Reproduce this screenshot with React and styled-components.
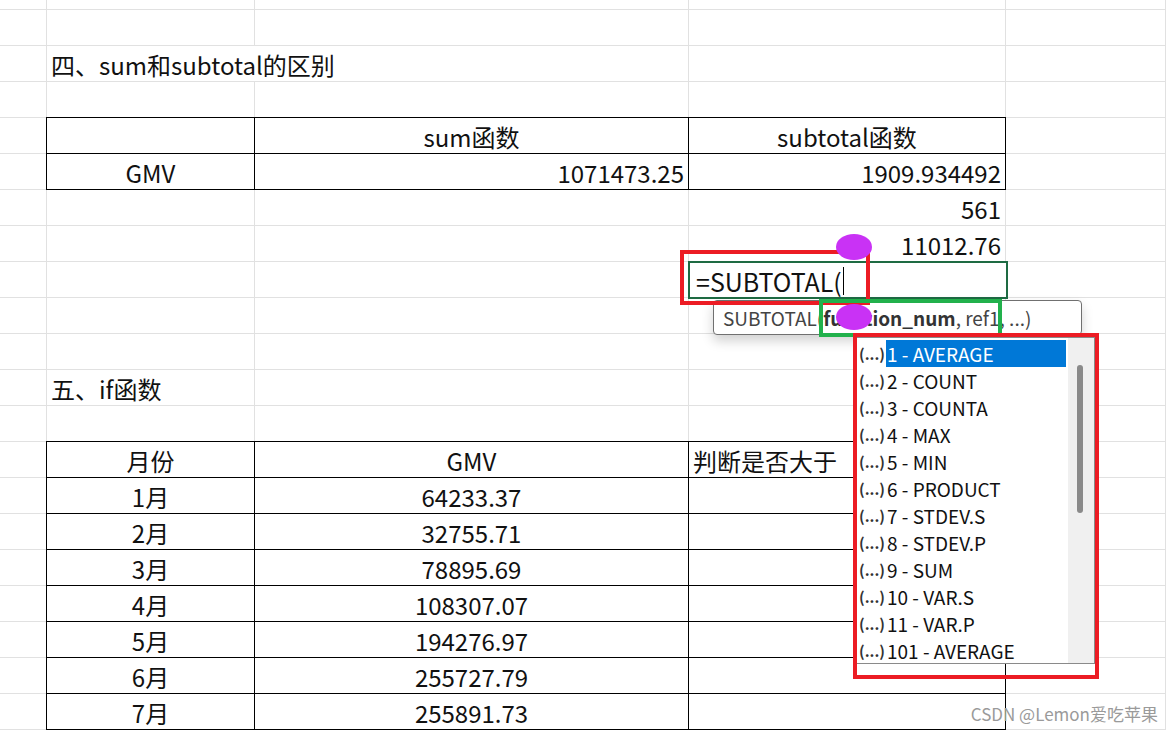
import React from "react";
import styled, { createGlobalStyle, css } from "styled-components";

const Global = createGlobalStyle`
  html, body { margin: 0; padding: 0; background: #fff; overflow: hidden; }
  body { font-family: "Noto Sans CJK SC", "Noto Sans", sans-serif; }
`;

const Page = styled.div`
  position: relative;
  width: 1166px;
  height: 732px;
  overflow: hidden;
`;

const Sheet = styled.div`
  display: grid;
  grid-template-columns: 47px 208px 434px 317px 160px;
  grid-auto-rows: 36px;
  margin-top: -26px;
`;

const Cell = styled.div`
  border-right: 1px solid #e1e1e1;
  border-bottom: 1px solid #e1e1e1;
  font-size: 24px;
  color: #111;
  display: flex;
  align-items: center;
  padding: 2px 4px 0;
  white-space: nowrap;
  overflow: visible;
  justify-content: ${(p) => (p.$align === "r" ? "flex-end" : p.$align === "c" ? "center" : "flex-start")};
  ${(p) => p.$span && css`grid-column: span ${p.$span};`}
  ${(p) =>
    p.$boxed &&
    css`
      border: 1px solid #000;
      margin: -1px 0 0 -1px;
      position: relative;
      z-index: 1;
    `}
`;

const Overlay = styled.div`
  position: absolute;
  box-sizing: border-box;
  z-index: 5;
`;

const ActiveCell = styled(Overlay)`
  left: 688px; top: 261px; width: 320px; height: 38px;
  border: 2px solid #1e6b43;
  background: #fff;
  font-size: 25px;
  display: flex; align-items: center; padding: 2px 0 0 6px;
  color: #111;
`;

const Caret = styled.span`
  display: inline-block; width: 1px; height: 28px; background: #000; margin-left: 1px;
`;

const RedBox = styled(Overlay)`
  border: 4px solid #ec1c24;
  z-index: 8;
`;

const GreenBox = styled(Overlay)`
  border: 4px solid #22b14c;
  z-index: 8;
`;

const Tip = styled(Overlay)`
  left: 713px; top: 300px; width: 369px; height: 35px;
  border: 1.5px solid #707070; border-radius: 4px;
  background: #fff;
  box-shadow: 0 6px 12px rgba(0,0,0,0.18);
  font-size: 19px; color: #444;
  display: flex; align-items: center; padding-left: 9px;
  b { color: #333; }
`;

const Blob = styled(Overlay)`
  width: 36px; height: 26px; border-radius: 50%;
  background: #c932f5; z-index: 9;
`;

const List = styled(Overlay)`
  left: 856px; top: 337px; width: 239px; height: 327px;
  border: 1.5px solid #8a8a8a; background: #fff;
  display: flex;
  z-index: 7;
`;

const Items = styled.div`
  flex: 1; padding-top: 2px;
`;

const Item = styled.div`
  height: 27px; display: flex; align-items: center;
  font-size: 19px; color: #111; white-space: nowrap;
`;

const Fx = styled.span`
  font-size: 15px; font-weight: bold; color: #333; width: 27px; padding-left: 2px;
`;

const Label = styled.span`
  flex: 1; padding-left: 1px; height: 27px; line-height: 27px; margin-right: 2px;
  ${(p) => p.$sel && css`background: #0078d7; color: #fff;`}
`;

const Track = styled.div`
  width: 26px; background: #f0f0f0; position: relative;
`;

const Thumb = styled.div`
  position: absolute; left: 9px; top: 27px; width: 6px; height: 148px;
  background: #8a8a8a; border-radius: 3px;
`;

const Mark = styled.div`
  position: absolute; right: 8px; bottom: 6px; font-size: 17px;
  color: #9a9a9a; z-index: 10;
`;

const E = (t = "", o = {}) => ({ t, ...o });
const rows = [
  [E(), E(), E(), E(), E()],
  [E(), E(), E(), E(), E()],
  [E(), E("四、sum和subtotal的区别", { span: 2 }), E(), E()],
  [E(), E(), E(), E(), E()],
  [E(), E("", { b: 1 }), E("sum函数", { b: 1, a: "c" }), E("subtotal函数", { b: 1, a: "c" }), E()],
  [E(), E("GMV", { b: 1, a: "c" }), E("1071473.25", { b: 1, a: "r" }), E("1909.934492", { b: 1, a: "r" }), E()],
  [E(), E(), E(), E("561", { a: "r" }), E()],
  [E(), E(), E(), E("11012.76", { a: "r" }), E()],
  [E(), E(), E(), E(), E()],
  [E(), E(), E(), E(), E()],
  [E(), E(), E(), E(), E()],
  [E(), E("五、if函数"), E(), E(), E()],
  [E(), E(), E(), E(), E()],
  [E(), E("月份", { b: 1, a: "c" }), E("GMV", { b: 1, a: "c" }), E("判断是否大于", { b: 1 }), E()],
  ...[
    ["1月", "64233.37"], ["2月", "32755.71"], ["3月", "78895.69"], ["4月", "108307.07"],
    ["5月", "194276.97"], ["6月", "255727.79"], ["7月", "255891.73"],
  ].map(([m, v]) => [E(), E(m, { b: 1, a: "c" }), E(v, { b: 1, a: "c" }), E("", { b: 1 }), E()]),
];

const items = ["1 - AVERAGE", "2 - COUNT", "3 - COUNTA", "4 - MAX", "5 - MIN", "6 - PRODUCT",
  "7 - STDEV.S", "8 - STDEV.P", "9 - SUM", "10 - VAR.S", "11 - VAR.P", "101 - AVERAGE"];

export default function App() {
  return (
    <Page>
      <Global />
      <Sheet>
        {rows.flatMap((r, i) =>
          r.map((c, j) => (
            <Cell key={i + "-" + j} $span={c.span} $boxed={c.b} $align={c.a}>{c.t}</Cell>
          ))
        )}
      </Sheet>
      <ActiveCell>=SUBTOTAL(<Caret /></ActiveCell>
      <Tip>SUBTOTAL(<b>function_num</b>, ref1, ...)</Tip>
      <List>
        <Items>
          {items.map((t, i) => (
            <Item key={t}><Fx>(...)</Fx><Label $sel={i === 0}>{t}</Label></Item>
          ))}
        </Items>
        <Track><Thumb /></Track>
      </List>
      <Blob style={{ left: 836, top: 234 }} />
      <Blob style={{ left: 836, top: 304 }} />
      <RedBox style={{ left: 680, top: 250, width: 190, height: 55 }} />
      <GreenBox style={{ left: 819, top: 299, width: 183, height: 38 }} />
      <RedBox style={{ left: 853, top: 333, width: 246, height: 346 }} />
      <Mark>CSDN @Lemon爱吃苹果</Mark>
    </Page>
  );
}
